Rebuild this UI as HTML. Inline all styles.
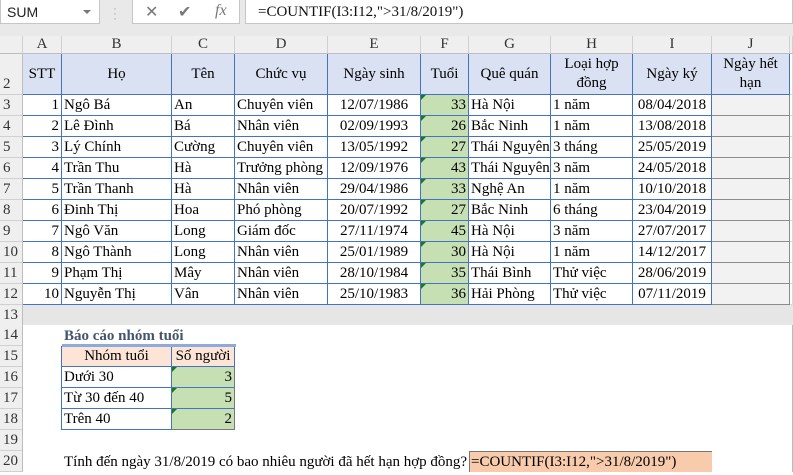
<!DOCTYPE html>
<html><head><meta charset="utf-8"><style>
body{margin:0;width:793px;height:475px;overflow:hidden;background:#fff;font-family:"Liberation Serif",serif;position:relative}
.top{position:absolute;left:0;top:0;width:793px;height:36px;background:#e9e9e9}
.nb{position:absolute;left:0;top:0;width:100px;height:24px;background:#fff;border:1px solid #c6c6c6;border-top:none;box-sizing:border-box;font:14px "Liberation Sans",sans-serif;color:#222;line-height:24px;padding-left:6px}
.nb:after{content:"";position:absolute;right:8px;top:10px;border:4px solid transparent;border-top:4px solid #777}
.ic{position:absolute;left:132px;top:0;width:108px;height:24px;background:#fff;border:1px solid #c6c6c6;border-top:none;box-sizing:border-box;color:#777;font:16px "Liberation Sans",sans-serif}
.fb{position:absolute;left:245px;top:0;width:548px;height:24px;background:#fff;border:1px solid #c6c6c6;border-top:none;box-sizing:border-box;font-size:15px;line-height:24px;padding-left:12px;color:#111}
table{position:absolute;left:0;top:36px;border-collapse:separate;border-spacing:0;table-layout:fixed;font-size:15px;width:793px}
td{padding:0 2px;border-right:1px solid #d9d9d9;border-bottom:1px solid #d9d9d9;white-space:nowrap;overflow:hidden;height:20px;line-height:20px;color:#000}
tr.h td{background:#efefef;text-align:center;color:#333;height:17px;line-height:17px;border-bottom:1px solid #bdbdbd;border-right:1px solid #d0d0d0}
td.r{background:#efefef;color:#333;text-align:left;padding-left:3px;border-right:1px solid #bdbdbd;border-bottom:1px solid #d0d0d0}
.hd{background:#d9e1f2;text-align:center;border-right:1px solid #4472c4;border-bottom:1px solid #4472c4}
.b{border-right:1px solid #4472c4;border-bottom:1px solid #4472c4}
.n{text-align:right}
.g{background:#c6e0b4;position:relative}
.g:before{content:"";position:absolute;left:0;top:0;border-top:5px solid #1a7a1a;border-right:5px solid transparent}
.j{background:#f2f2f2;border-right:1px solid #8c8c8c;border-bottom:1px solid #8c8c8c}
tr.gr td{background:#e6e6e6;border-bottom:none;border-right:none}
tr.gr td.r{background:#efefef;border-right:1px solid #bdbdbd}
.c{text-align:center}
.pk{background:#fce4d6;text-align:center;border-right:1px solid #4472c4;border-bottom:1px solid #4472c4}
.nr{border-right:none}
</style></head><body>
<div class="top"></div>
<div class="nb">SUM</div>
<div style="position:absolute;left:113px;top:6px;color:#aaa;font:12px sans-serif;line-height:5px">·<br>·<br>·</div>
<div class="ic"><span style="position:absolute;left:12px;top:2px">✕</span><span style="position:absolute;left:45px;top:2px">✔</span><span style="position:absolute;left:82px;top:2px;font-family:'Liberation Serif',serif;font-style:italic">fx</span></div>
<div class="fb">=COUNTIF(I3:I12,"&gt;31/8/2019")</div>
<table>
<colgroup><col style="width:23px"><col style="width:39px"><col style="width:110px"><col style="width:63px"><col style="width:93px"><col style="width:93px"><col style="width:48px"><col style="width:82px"><col style="width:82px"><col style="width:79px"><col style="width:78px"><col style="width:3px"></colgroup>
<tr class="h"><td style="background:#efefef"></td><td>A</td><td>B</td><td>C</td><td>D</td><td>E</td><td>F</td><td>G</td><td>H</td><td>I</td><td>J</td><td></td></tr>
<tr style="height:41px"><td class="r" style="height:40px;vertical-align:bottom">2</td><td class="hd" style="height:40px">STT</td><td class="hd">Họ</td><td class="hd">Tên</td><td class="hd">Chức vụ</td><td class="hd">Ngày sinh</td><td class="hd">Tuổi</td><td class="hd">Quê quán</td><td class="hd" style="line-height:19px">Loại hợp<br>đồng</td><td class="hd">Ngày ký</td><td class="hd" style="line-height:19px">Ngày hết<br>hạn</td><td></td></tr>
<tr><td class="r">3</td><td class="b n">1</td><td class="b">Ngô Bá</td><td class="b">An</td><td class="b">Chuyên viên</td><td class="b c">12/07/1986</td><td class="b n g">33</td><td class="b">Hà Nội</td><td class="b">1 năm</td><td class="b c">08/04/2018</td><td class="j"></td><td></td></tr>
<tr><td class="r">4</td><td class="b n">2</td><td class="b">Lê Đình</td><td class="b">Bá</td><td class="b">Nhân viên</td><td class="b c">02/09/1993</td><td class="b n g">26</td><td class="b">Bắc Ninh</td><td class="b">1 năm</td><td class="b c">13/08/2018</td><td class="j"></td><td></td></tr>
<tr><td class="r">5</td><td class="b n">3</td><td class="b">Lý Chính</td><td class="b">Cường</td><td class="b">Chuyên viên</td><td class="b c">13/05/1992</td><td class="b n g">27</td><td class="b">Thái Nguyên</td><td class="b">3 tháng</td><td class="b c">25/05/2019</td><td class="j"></td><td></td></tr>
<tr><td class="r">6</td><td class="b n">4</td><td class="b">Trần Thu</td><td class="b">Hà</td><td class="b">Trưởng phòng</td><td class="b c">12/09/1976</td><td class="b n g">43</td><td class="b">Thái Nguyên</td><td class="b">3 năm</td><td class="b c">24/05/2018</td><td class="j"></td><td></td></tr>
<tr><td class="r">7</td><td class="b n">5</td><td class="b">Trần Thanh</td><td class="b">Hà</td><td class="b">Nhân viên</td><td class="b c">29/04/1986</td><td class="b n g">33</td><td class="b">Nghệ An</td><td class="b">1 năm</td><td class="b c">10/10/2018</td><td class="j"></td><td></td></tr>
<tr><td class="r">8</td><td class="b n">6</td><td class="b">Đinh Thị</td><td class="b">Hoa</td><td class="b">Phó phòng</td><td class="b c">20/07/1992</td><td class="b n g">27</td><td class="b">Bắc Ninh</td><td class="b">6 tháng</td><td class="b c">23/04/2019</td><td class="j"></td><td></td></tr>
<tr><td class="r">9</td><td class="b n">7</td><td class="b">Ngô Văn</td><td class="b">Long</td><td class="b">Giám đốc</td><td class="b c">27/11/1974</td><td class="b n g">45</td><td class="b">Hà Nội</td><td class="b">3 năm</td><td class="b c">27/07/2017</td><td class="j"></td><td></td></tr>
<tr><td class="r">10</td><td class="b n">8</td><td class="b">Ngô Thành</td><td class="b">Long</td><td class="b">Nhân viên</td><td class="b c">25/01/1989</td><td class="b n g">30</td><td class="b">Hà Nội</td><td class="b">1 năm</td><td class="b c">14/12/2017</td><td class="j"></td><td></td></tr>
<tr><td class="r">11</td><td class="b n">9</td><td class="b">Phạm Thị</td><td class="b">Mây</td><td class="b">Nhân viên</td><td class="b c">28/10/1984</td><td class="b n g">35</td><td class="b">Thái Bình</td><td class="b">Thử việc</td><td class="b c">28/06/2019</td><td class="j"></td><td></td></tr>
<tr><td class="r">12</td><td class="b n">10</td><td class="b">Nguyễn Thị</td><td class="b">Vân</td><td class="b">Nhân viên</td><td class="b c">25/10/1983</td><td class="b n g">36</td><td class="b">Hải Phòng</td><td class="b">Thử việc</td><td class="b c">07/11/2019</td><td class="j"></td><td></td></tr>
<tr class="gr"><td class="r">13</td><td></td><td></td><td></td><td></td><td></td><td></td><td></td><td></td><td></td><td></td><td></td></tr>
<tr><td class="r">14</td><td style="border:none"></td><td colspan="2" style="border:none;font-weight:bold;color:#44546a;overflow:visible">Báo cáo nhóm tuổi</td><td colspan="8" style="border:none;border-right:1px solid #bbb"></td></tr>
<tr><td class="r">15</td><td style="border:none;border-right:1px solid #4472c4"></td><td class="pk">Nhóm tuổi</td><td class="pk">Số người</td><td colspan="8" style="border:none;border-right:1px solid #bbb"></td></tr>
<tr><td class="r">16</td><td style="border:none;border-right:1px solid #4472c4"></td><td class="b">Dưới 30</td><td class="b n g" style="border-right:1px solid #777">3</td><td colspan="8" style="border:none;border-right:1px solid #bbb"></td></tr>
<tr><td class="r">17</td><td style="border:none;border-right:1px solid #4472c4"></td><td class="b">Từ 30 đến 40</td><td class="b n g" style="border-right:1px solid #777">5</td><td colspan="8" style="border:none;border-right:1px solid #bbb"></td></tr>
<tr><td class="r">18</td><td style="border:none;border-right:1px solid #4472c4"></td><td class="b">Trên 40</td><td class="b n g" style="border-right:1px solid #777;border-bottom:1px solid #777">2</td><td colspan="8" style="border:none;border-right:1px solid #bbb"></td></tr>
<tr><td class="r">19</td><td colspan="11" style="border:none;border-right:1px solid #bbb"></td></tr>
<tr><td class="r">20</td><td style="border:none"></td><td colspan="5" style="border:none;overflow:visible">Tính đến ngày 31/8/2019 có bao nhiêu người đã hết hạn hợp đồng?</td><td colspan="3" style="border:none;background:#f8cbad;box-shadow:inset 1px 1px 0 #777">=COUNTIF(I3:I12,"&gt;31/8/2019")</td><td style="border:none"></td><td style="border:none;border-right:1px solid #bbb"></td></tr>
</table>
<div style="position:absolute;left:62px;top:344px;width:174px;height:3px;background:#8ea9db"></div>
</body></html>
